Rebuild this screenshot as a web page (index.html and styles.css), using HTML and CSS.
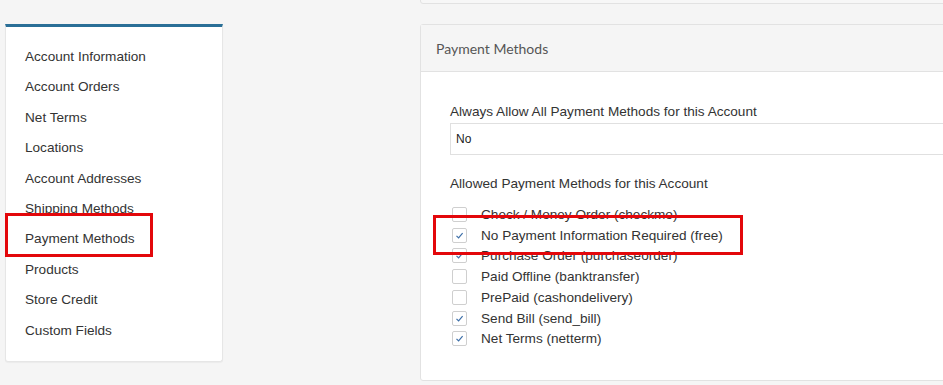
FILE: index.html
```html
<!DOCTYPE html>
<html lang="en">
<head>
	<meta charset="UTF-8">
	<title>Account - Payment Methods</title>
	<link rel="stylesheet" href="styles.css">
</head>
<body>
	<div class="page">
		<div class="sidebar">
			<ul class="side-menu">
				<li>Account Information</li>
				<li>Account Orders</li>
				<li>Net Terms</li>
				<li>Locations</li>
				<li>Account Addresses</li>
				<li>Shipping Methods</li>
				<li>Payment Methods</li>
				<li>Products</li>
				<li>Store Credit</li>
				<li>Custom Fields</li>
			</ul>
			<div class="highlight highlight-menu"></div>
		</div>
		<div class="main">
			<div class="card card-prev"></div>
			<div class="card">
				<div class="card-header">Payment Methods</div>
				<div class="card-body">
					<div class="field-label">Always Allow All Payment Methods for this Account</div>
					<div class="select-box">No</div>
					<div class="field-label second">Allowed Payment Methods for this Account</div>
					<ul class="check-list">
						<li><span class="box"></span>Check / Money Order (checkmo)</li>
						<li><span class="box checked"><svg viewBox="0 0 13 13"><path d="M3.5 6.8 L5.6 8.9 L9.6 4.2"/></svg></span>No Payment Information Required (free)</li>
						<li><span class="box checked"><svg viewBox="0 0 13 13"><path d="M3.5 6.8 L5.6 8.9 L9.6 4.2"/></svg></span>Purchase Order (purchaseorder)</li>
						<li><span class="box"></span>Paid Offline (banktransfer)</li>
						<li><span class="box"></span>PrePaid (cashondelivery)</li>
						<li><span class="box checked"><svg viewBox="0 0 13 13"><path d="M3.5 6.8 L5.6 8.9 L9.6 4.2"/></svg></span>Send Bill (send_bill)</li>
						<li><span class="box checked"><svg viewBox="0 0 13 13"><path d="M3.5 6.8 L5.6 8.9 L9.6 4.2"/></svg></span>Net Terms (netterm)</li>
					</ul>
				</div>
				<div class="highlight highlight-row"></div>
			</div>
		</div>
	</div>
</body>
</html>
```

FILE: styles.css
```css
body {
	margin: 0;
	background-color: #f5f5f5;
	font-family: "Liberation Sans", Arial, sans-serif;
	font-size: 13.6px;
	color: #333;
	overflow: hidden;
}
.page {
	display: flex;
	align-items: flex-start;
	padding-left: 5px;
	gap: 197px;
}
.sidebar {
	position: relative;
	flex-shrink: 0;
	width: 216px;
	margin-top: 24px;
	background: white;
	border: 1px solid #e6e6e6;
	border-top: 3px solid #2a6f97;
	border-radius: 0 0 3px 3px;
	box-shadow: 0 1px 1px rgba(0,0,0,0.04);
}
.side-menu {
	list-style: none;
	margin: 0;
	padding: 15px 0 15px 19px;
}
.side-menu li {
	line-height: 30.4px;
	height: 30.4px;
}
.highlight {
	position: absolute;
	border: 3px solid #e3070b;
	box-sizing: border-box;
}
.highlight-menu {
	left: -1px;
	top: 186px;
	width: 148px;
	height: 44px;
}
.main {
	flex-shrink: 0;
	width: 540px;
	display: flex;
	flex-direction: column;
}
.card {
	position: relative;
	background: white;
	border: 1px solid #e2e2e2;
	border-radius: 3px;
}
.card-prev {
	height: 20px;
	margin-top: -18px;
	margin-bottom: 20px;
	background: #f7f7f7;
}
.card-header {
	height: 46px;
	line-height: 48px;
	padding-left: 15px;
	background: #f5f5f5;
	border-bottom: 1px solid #e2e2e2;
	font-family: Lato, "Open Sans", sans-serif;
	font-size: 14px;
	color: #555;
}
.card-body {
	padding: 31px 0 31px 29px;
}
.field-label {
	line-height: 18px;
	margin-bottom: 2px;
}
.field-label.second {
	margin-top: 20px;
	margin-bottom: 11px;
}
.select-box {
	height: 30px;
	line-height: 30px;
	padding-left: 5px;
	border: 1px solid #e0e0e0;
	border-right: none;
	font-size: 12px;
	color: #222;
}
.check-list {
	list-style: none;
	margin: 0;
	padding: 0;
}
.check-list li {
	display: flex;
	align-items: center;
	height: 20.75px;
}
.box {
	width: 13px;
	height: 13px;
	margin-left: 2px;
	margin-right: 14px;
	border: 1px solid #cfcfcf;
	border-radius: 2px;
	background: white;
}
.box svg {
	display: block;
	width: 13px;
	height: 13px;
}
.box svg path {
	fill: none;
	stroke: #3d6fa8;
	stroke-width: 1.2;
}
.highlight-row {
	left: 12px;
	top: 190px;
	width: 310px;
	height: 40px;
}
```
